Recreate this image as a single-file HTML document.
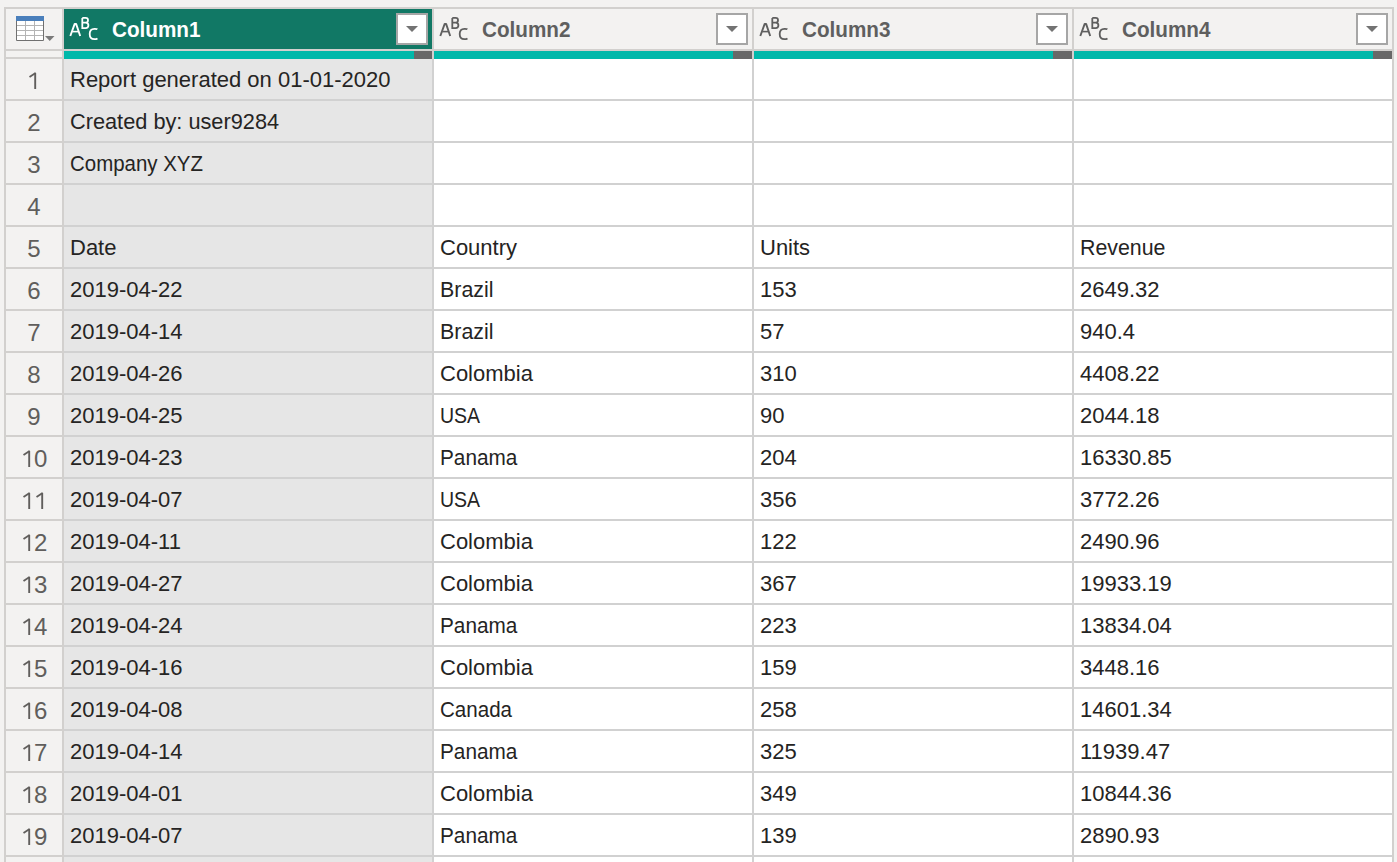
<!DOCTYPE html>
<html><head><meta charset="utf-8"><style>
*{margin:0;padding:0;box-sizing:border-box}
html,body{width:1397px;height:862px;overflow:hidden;background:#f3f2f1;position:relative;font-family:"Liberation Sans",sans-serif}
.a{position:absolute}
.t{position:absolute;font-size:22px;line-height:22px;color:#252423;white-space:nowrap}
.rn{position:absolute;font-size:24px;line-height:24px;color:#605e5c;width:56px;text-align:center;white-space:nowrap}
.hd{position:absolute;font-size:22px;line-height:22px;font-weight:bold;white-space:nowrap;transform:scaleX(0.94);transform-origin:0 0}
.ic{position:absolute;line-height:1;white-space:nowrap}
.dd{position:absolute;width:32px;height:32px;top:13px;background:#fff;border:2px solid #a6a6a6}
.dd i{position:absolute;left:8px;top:11px;width:0;height:0;border-left:6px solid transparent;border-right:6px solid transparent;border-top:6px solid #737373}
</style></head><body>
<div class="a" style="left:4px;top:7px;width:1390px;height:855px;background:#d2d0ce"></div><div class="a" style="left:6px;top:9px;width:56px;height:853px;background:#f3f2f1"></div><div class="a" style="left:64px;top:59px;width:368px;height:803px;background:#e6e6e6"></div><div class="a" style="left:64px;top:9px;width:368px;height:40px;background:#117865"></div><div class="a" style="left:64px;top:51px;width:350px;height:8px;background:#01b8aa"></div><div class="a" style="left:414px;top:51px;width:18px;height:8px;background:#686868"></div><div class="a" style="left:434px;top:59px;width:318px;height:803px;background:#ffffff"></div><div class="a" style="left:434px;top:9px;width:318px;height:40px;background:#f3f2f1"></div><div class="a" style="left:434px;top:51px;width:299px;height:8px;background:#01b8aa"></div><div class="a" style="left:733px;top:51px;width:19px;height:8px;background:#686868"></div><div class="a" style="left:754px;top:59px;width:318px;height:803px;background:#ffffff"></div><div class="a" style="left:754px;top:9px;width:318px;height:40px;background:#f3f2f1"></div><div class="a" style="left:754px;top:51px;width:299px;height:8px;background:#01b8aa"></div><div class="a" style="left:1053px;top:51px;width:19px;height:8px;background:#686868"></div><div class="a" style="left:1074px;top:59px;width:318px;height:803px;background:#ffffff"></div><div class="a" style="left:1074px;top:9px;width:318px;height:40px;background:#f3f2f1"></div><div class="a" style="left:1074px;top:51px;width:299px;height:8px;background:#01b8aa"></div><div class="a" style="left:1373px;top:51px;width:19px;height:8px;background:#686868"></div><div class="a" style="left:6px;top:49px;width:56px;height:2px;background:#d2d0ce"></div><div class="a" style="left:6px;top:57px;width:56px;height:2px;background:#d2d0ce"></div><div class="a" style="left:6px;top:99px;width:56px;height:2px;background:#d2d0ce"></div><div class="a" style="left:64px;top:99px;width:368px;height:2px;background:#d1d1d1"></div><div class="a" style="left:434px;top:99px;width:318px;height:2px;background:#d1d1d1"></div><div class="a" style="left:754px;top:99px;width:318px;height:2px;background:#d1d1d1"></div><div class="a" style="left:1074px;top:99px;width:318px;height:2px;background:#d1d1d1"></div><div class="a" style="left:6px;top:141px;width:56px;height:2px;background:#d2d0ce"></div><div class="a" style="left:64px;top:141px;width:368px;height:2px;background:#d1d1d1"></div><div class="a" style="left:434px;top:141px;width:318px;height:2px;background:#d1d1d1"></div><div class="a" style="left:754px;top:141px;width:318px;height:2px;background:#d1d1d1"></div><div class="a" style="left:1074px;top:141px;width:318px;height:2px;background:#d1d1d1"></div><div class="a" style="left:6px;top:183px;width:56px;height:2px;background:#d2d0ce"></div><div class="a" style="left:64px;top:183px;width:368px;height:2px;background:#d1d1d1"></div><div class="a" style="left:434px;top:183px;width:318px;height:2px;background:#d1d1d1"></div><div class="a" style="left:754px;top:183px;width:318px;height:2px;background:#d1d1d1"></div><div class="a" style="left:1074px;top:183px;width:318px;height:2px;background:#d1d1d1"></div><div class="a" style="left:6px;top:225px;width:56px;height:2px;background:#d2d0ce"></div><div class="a" style="left:64px;top:225px;width:368px;height:2px;background:#d1d1d1"></div><div class="a" style="left:434px;top:225px;width:318px;height:2px;background:#d1d1d1"></div><div class="a" style="left:754px;top:225px;width:318px;height:2px;background:#d1d1d1"></div><div class="a" style="left:1074px;top:225px;width:318px;height:2px;background:#d1d1d1"></div><div class="a" style="left:6px;top:267px;width:56px;height:2px;background:#d2d0ce"></div><div class="a" style="left:64px;top:267px;width:368px;height:2px;background:#d1d1d1"></div><div class="a" style="left:434px;top:267px;width:318px;height:2px;background:#d1d1d1"></div><div class="a" style="left:754px;top:267px;width:318px;height:2px;background:#d1d1d1"></div><div class="a" style="left:1074px;top:267px;width:318px;height:2px;background:#d1d1d1"></div><div class="a" style="left:6px;top:309px;width:56px;height:2px;background:#d2d0ce"></div><div class="a" style="left:64px;top:309px;width:368px;height:2px;background:#d1d1d1"></div><div class="a" style="left:434px;top:309px;width:318px;height:2px;background:#d1d1d1"></div><div class="a" style="left:754px;top:309px;width:318px;height:2px;background:#d1d1d1"></div><div class="a" style="left:1074px;top:309px;width:318px;height:2px;background:#d1d1d1"></div><div class="a" style="left:6px;top:351px;width:56px;height:2px;background:#d2d0ce"></div><div class="a" style="left:64px;top:351px;width:368px;height:2px;background:#d1d1d1"></div><div class="a" style="left:434px;top:351px;width:318px;height:2px;background:#d1d1d1"></div><div class="a" style="left:754px;top:351px;width:318px;height:2px;background:#d1d1d1"></div><div class="a" style="left:1074px;top:351px;width:318px;height:2px;background:#d1d1d1"></div><div class="a" style="left:6px;top:393px;width:56px;height:2px;background:#d2d0ce"></div><div class="a" style="left:64px;top:393px;width:368px;height:2px;background:#d1d1d1"></div><div class="a" style="left:434px;top:393px;width:318px;height:2px;background:#d1d1d1"></div><div class="a" style="left:754px;top:393px;width:318px;height:2px;background:#d1d1d1"></div><div class="a" style="left:1074px;top:393px;width:318px;height:2px;background:#d1d1d1"></div><div class="a" style="left:6px;top:435px;width:56px;height:2px;background:#d2d0ce"></div><div class="a" style="left:64px;top:435px;width:368px;height:2px;background:#d1d1d1"></div><div class="a" style="left:434px;top:435px;width:318px;height:2px;background:#d1d1d1"></div><div class="a" style="left:754px;top:435px;width:318px;height:2px;background:#d1d1d1"></div><div class="a" style="left:1074px;top:435px;width:318px;height:2px;background:#d1d1d1"></div><div class="a" style="left:6px;top:477px;width:56px;height:2px;background:#d2d0ce"></div><div class="a" style="left:64px;top:477px;width:368px;height:2px;background:#d1d1d1"></div><div class="a" style="left:434px;top:477px;width:318px;height:2px;background:#d1d1d1"></div><div class="a" style="left:754px;top:477px;width:318px;height:2px;background:#d1d1d1"></div><div class="a" style="left:1074px;top:477px;width:318px;height:2px;background:#d1d1d1"></div><div class="a" style="left:6px;top:519px;width:56px;height:2px;background:#d2d0ce"></div><div class="a" style="left:64px;top:519px;width:368px;height:2px;background:#d1d1d1"></div><div class="a" style="left:434px;top:519px;width:318px;height:2px;background:#d1d1d1"></div><div class="a" style="left:754px;top:519px;width:318px;height:2px;background:#d1d1d1"></div><div class="a" style="left:1074px;top:519px;width:318px;height:2px;background:#d1d1d1"></div><div class="a" style="left:6px;top:561px;width:56px;height:2px;background:#d2d0ce"></div><div class="a" style="left:64px;top:561px;width:368px;height:2px;background:#d1d1d1"></div><div class="a" style="left:434px;top:561px;width:318px;height:2px;background:#d1d1d1"></div><div class="a" style="left:754px;top:561px;width:318px;height:2px;background:#d1d1d1"></div><div class="a" style="left:1074px;top:561px;width:318px;height:2px;background:#d1d1d1"></div><div class="a" style="left:6px;top:603px;width:56px;height:2px;background:#d2d0ce"></div><div class="a" style="left:64px;top:603px;width:368px;height:2px;background:#d1d1d1"></div><div class="a" style="left:434px;top:603px;width:318px;height:2px;background:#d1d1d1"></div><div class="a" style="left:754px;top:603px;width:318px;height:2px;background:#d1d1d1"></div><div class="a" style="left:1074px;top:603px;width:318px;height:2px;background:#d1d1d1"></div><div class="a" style="left:6px;top:645px;width:56px;height:2px;background:#d2d0ce"></div><div class="a" style="left:64px;top:645px;width:368px;height:2px;background:#d1d1d1"></div><div class="a" style="left:434px;top:645px;width:318px;height:2px;background:#d1d1d1"></div><div class="a" style="left:754px;top:645px;width:318px;height:2px;background:#d1d1d1"></div><div class="a" style="left:1074px;top:645px;width:318px;height:2px;background:#d1d1d1"></div><div class="a" style="left:6px;top:687px;width:56px;height:2px;background:#d2d0ce"></div><div class="a" style="left:64px;top:687px;width:368px;height:2px;background:#d1d1d1"></div><div class="a" style="left:434px;top:687px;width:318px;height:2px;background:#d1d1d1"></div><div class="a" style="left:754px;top:687px;width:318px;height:2px;background:#d1d1d1"></div><div class="a" style="left:1074px;top:687px;width:318px;height:2px;background:#d1d1d1"></div><div class="a" style="left:6px;top:729px;width:56px;height:2px;background:#d2d0ce"></div><div class="a" style="left:64px;top:729px;width:368px;height:2px;background:#d1d1d1"></div><div class="a" style="left:434px;top:729px;width:318px;height:2px;background:#d1d1d1"></div><div class="a" style="left:754px;top:729px;width:318px;height:2px;background:#d1d1d1"></div><div class="a" style="left:1074px;top:729px;width:318px;height:2px;background:#d1d1d1"></div><div class="a" style="left:6px;top:771px;width:56px;height:2px;background:#d2d0ce"></div><div class="a" style="left:64px;top:771px;width:368px;height:2px;background:#d1d1d1"></div><div class="a" style="left:434px;top:771px;width:318px;height:2px;background:#d1d1d1"></div><div class="a" style="left:754px;top:771px;width:318px;height:2px;background:#d1d1d1"></div><div class="a" style="left:1074px;top:771px;width:318px;height:2px;background:#d1d1d1"></div><div class="a" style="left:6px;top:813px;width:56px;height:2px;background:#d2d0ce"></div><div class="a" style="left:64px;top:813px;width:368px;height:2px;background:#d1d1d1"></div><div class="a" style="left:434px;top:813px;width:318px;height:2px;background:#d1d1d1"></div><div class="a" style="left:754px;top:813px;width:318px;height:2px;background:#d1d1d1"></div><div class="a" style="left:1074px;top:813px;width:318px;height:2px;background:#d1d1d1"></div><div class="a" style="left:6px;top:855px;width:56px;height:2px;background:#d2d0ce"></div><div class="a" style="left:64px;top:855px;width:368px;height:2px;background:#d1d1d1"></div><div class="a" style="left:434px;top:855px;width:318px;height:2px;background:#d1d1d1"></div><div class="a" style="left:754px;top:855px;width:318px;height:2px;background:#d1d1d1"></div><div class="a" style="left:1074px;top:855px;width:318px;height:2px;background:#d1d1d1"></div><div class="a" style="left:432px;top:59px;width:2px;height:803px;background:#d1d1d1"></div><div class="a" style="left:752px;top:59px;width:2px;height:803px;background:#d1d1d1"></div><div class="a" style="left:1072px;top:59px;width:2px;height:803px;background:#d1d1d1"></div><svg class="a" style="left:0;top:0" width="60" height="48" viewBox="0 0 60 48">
<rect x="16" y="21" width="28" height="20" fill="#fff"/>
<rect x="16" y="16" width="28" height="5" fill="#4a7fbb"/>
<path d="M16.5 21V40.5H43.5V21" stroke="#707070" stroke-width="1" fill="none"/>
<path d="M17 25.5H43M17 30.5H43M17 35.5H43M25.5 21V40M34.5 21V40" stroke="#b4b4b4" stroke-width="1"/>
<path d="M45 36H54.5L49.75 41Z" fill="#7a7a7a"/>
</svg><svg class="a" style="left:64px;top:0" width="40" height="48" viewBox="0 0 40 48" fill="none" stroke="#ffffff">
<path d="M6.3 36 L10.7 23.9 H12.1 L16.2 36" stroke-width="1.9" stroke-linejoin="round"/>
<path d="M8.3 31.6 H14.2" stroke-width="1.6"/>
<path d="M18.3 17.9 H21.6 C23.4 17.9 24.0 18.8 24.0 20.2 C24.0 21.6 23.3 22.6 21.6 22.6 H18.3 M21.6 22.6 C23.8 22.6 24.4 23.6 24.4 25.3 C24.4 27.1 23.7 28.1 21.6 28.1 H18.3 V17.9" stroke-width="1.8"/>
<path d="M33.4 29.3 C32.6 28.7 31.6 28.8 30.4 28.8 C27.6 28.8 25.7 30.9 25.7 34 C25.7 37.2 27.6 39.2 30.4 39.2 C31.6 39.2 32.6 39 33.5 38.4" stroke-width="1.8"/>
</svg><div class="hd" style="left:112px;top:19px;color:#ffffff">Column1</div><div class="dd" style="left:396px"><i></i></div><svg class="a" style="left:434px;top:0" width="40" height="48" viewBox="0 0 40 48" fill="none" stroke="#5f5f5f">
<path d="M6.3 36 L10.7 23.9 H12.1 L16.2 36" stroke-width="1.9" stroke-linejoin="round"/>
<path d="M8.3 31.6 H14.2" stroke-width="1.6"/>
<path d="M18.3 17.9 H21.6 C23.4 17.9 24.0 18.8 24.0 20.2 C24.0 21.6 23.3 22.6 21.6 22.6 H18.3 M21.6 22.6 C23.8 22.6 24.4 23.6 24.4 25.3 C24.4 27.1 23.7 28.1 21.6 28.1 H18.3 V17.9" stroke-width="1.8"/>
<path d="M33.4 29.3 C32.6 28.7 31.6 28.8 30.4 28.8 C27.6 28.8 25.7 30.9 25.7 34 C25.7 37.2 27.6 39.2 30.4 39.2 C31.6 39.2 32.6 39 33.5 38.4" stroke-width="1.8"/>
</svg><div class="hd" style="left:482px;top:19px;color:#5f5f5f">Column2</div><div class="dd" style="left:716px"><i></i></div><svg class="a" style="left:754px;top:0" width="40" height="48" viewBox="0 0 40 48" fill="none" stroke="#5f5f5f">
<path d="M6.3 36 L10.7 23.9 H12.1 L16.2 36" stroke-width="1.9" stroke-linejoin="round"/>
<path d="M8.3 31.6 H14.2" stroke-width="1.6"/>
<path d="M18.3 17.9 H21.6 C23.4 17.9 24.0 18.8 24.0 20.2 C24.0 21.6 23.3 22.6 21.6 22.6 H18.3 M21.6 22.6 C23.8 22.6 24.4 23.6 24.4 25.3 C24.4 27.1 23.7 28.1 21.6 28.1 H18.3 V17.9" stroke-width="1.8"/>
<path d="M33.4 29.3 C32.6 28.7 31.6 28.8 30.4 28.8 C27.6 28.8 25.7 30.9 25.7 34 C25.7 37.2 27.6 39.2 30.4 39.2 C31.6 39.2 32.6 39 33.5 38.4" stroke-width="1.8"/>
</svg><div class="hd" style="left:802px;top:19px;color:#5f5f5f">Column3</div><div class="dd" style="left:1036px"><i></i></div><svg class="a" style="left:1074px;top:0" width="40" height="48" viewBox="0 0 40 48" fill="none" stroke="#5f5f5f">
<path d="M6.3 36 L10.7 23.9 H12.1 L16.2 36" stroke-width="1.9" stroke-linejoin="round"/>
<path d="M8.3 31.6 H14.2" stroke-width="1.6"/>
<path d="M18.3 17.9 H21.6 C23.4 17.9 24.0 18.8 24.0 20.2 C24.0 21.6 23.3 22.6 21.6 22.6 H18.3 M21.6 22.6 C23.8 22.6 24.4 23.6 24.4 25.3 C24.4 27.1 23.7 28.1 21.6 28.1 H18.3 V17.9" stroke-width="1.8"/>
<path d="M33.4 29.3 C32.6 28.7 31.6 28.8 30.4 28.8 C27.6 28.8 25.7 30.9 25.7 34 C25.7 37.2 27.6 39.2 30.4 39.2 C31.6 39.2 32.6 39 33.5 38.4" stroke-width="1.8"/>
</svg><div class="hd" style="left:1122px;top:19px;color:#5f5f5f">Column4</div><div class="dd" style="left:1356px"><i></i></div><div class="rn" style="left:6px;top:69px"><svg width="13.35" height="17" viewBox="0 0 13.35 17" style="vertical-align:baseline" fill="none" stroke="#605e5c"><path d="M8.2 17V0.8" stroke-width="1.9"/><path d="M2.5 4.9L8.6 1.0" stroke-width="1.8"/></svg></div><div class="t" style="left:70px;top:69px">Report generated on 01-01-2020</div><div class="rn" style="left:6px;top:111px">2</div><div class="t" style="left:70px;top:111px;transform:scaleX(0.9881);transform-origin:0 0">Created by: user9284</div><div class="rn" style="left:6px;top:153px">3</div><div class="t" style="left:70px;top:153px;transform:scaleX(0.9296);transform-origin:0 0">Company XYZ</div><div class="rn" style="left:6px;top:195px">4</div><div class="rn" style="left:6px;top:237px">5</div><div class="t" style="left:70px;top:237px">Date</div><div class="t" style="left:440px;top:237px">Country</div><div class="t" style="left:760px;top:237px">Units</div><div class="t" style="left:1080px;top:237px;transform:scaleX(0.9709);transform-origin:0 0">Revenue</div><div class="rn" style="left:6px;top:279px">6</div><div class="t" style="left:70px;top:279px">2019-04-22</div><div class="t" style="left:440px;top:279px;transform:scaleX(0.9717);transform-origin:0 0">Brazil</div><div class="t" style="left:760px;top:279px">153</div><div class="t" style="left:1080px;top:279px">2649.32</div><div class="rn" style="left:6px;top:321px">7</div><div class="t" style="left:70px;top:321px">2019-04-14</div><div class="t" style="left:440px;top:321px;transform:scaleX(0.9717);transform-origin:0 0">Brazil</div><div class="t" style="left:760px;top:321px">57</div><div class="t" style="left:1080px;top:321px">940.4</div><div class="rn" style="left:6px;top:363px">8</div><div class="t" style="left:70px;top:363px">2019-04-26</div><div class="t" style="left:440px;top:363px">Colombia</div><div class="t" style="left:760px;top:363px">310</div><div class="t" style="left:1080px;top:363px">4408.22</div><div class="rn" style="left:6px;top:405px">9</div><div class="t" style="left:70px;top:405px">2019-04-25</div><div class="t" style="left:440px;top:405px;transform:scaleX(0.8864);transform-origin:0 0">USA</div><div class="t" style="left:760px;top:405px">90</div><div class="t" style="left:1080px;top:405px">2044.18</div><div class="rn" style="left:6px;top:447px"><svg width="13.35" height="17" viewBox="0 0 13.35 17" style="vertical-align:baseline" fill="none" stroke="#605e5c"><path d="M8.2 17V0.8" stroke-width="1.9"/><path d="M2.5 4.9L8.6 1.0" stroke-width="1.8"/></svg>0</div><div class="t" style="left:70px;top:447px">2019-04-23</div><div class="t" style="left:440px;top:447px;transform:scaleX(0.9432);transform-origin:0 0">Panama</div><div class="t" style="left:760px;top:447px">204</div><div class="t" style="left:1080px;top:447px">16330.85</div><div class="rn" style="left:6px;top:489px"><svg width="13.35" height="17" viewBox="0 0 13.35 17" style="vertical-align:baseline" fill="none" stroke="#605e5c"><path d="M8.2 17V0.8" stroke-width="1.9"/><path d="M2.5 4.9L8.6 1.0" stroke-width="1.8"/></svg><svg width="13.35" height="17" viewBox="0 0 13.35 17" style="vertical-align:baseline" fill="none" stroke="#605e5c"><path d="M8.2 17V0.8" stroke-width="1.9"/><path d="M2.5 4.9L8.6 1.0" stroke-width="1.8"/></svg></div><div class="t" style="left:70px;top:489px">2019-04-07</div><div class="t" style="left:440px;top:489px;transform:scaleX(0.8864);transform-origin:0 0">USA</div><div class="t" style="left:760px;top:489px">356</div><div class="t" style="left:1080px;top:489px">3772.26</div><div class="rn" style="left:6px;top:531px"><svg width="13.35" height="17" viewBox="0 0 13.35 17" style="vertical-align:baseline" fill="none" stroke="#605e5c"><path d="M8.2 17V0.8" stroke-width="1.9"/><path d="M2.5 4.9L8.6 1.0" stroke-width="1.8"/></svg>2</div><div class="t" style="left:70px;top:531px">2019-04-11</div><div class="t" style="left:440px;top:531px">Colombia</div><div class="t" style="left:760px;top:531px">122</div><div class="t" style="left:1080px;top:531px">2490.96</div><div class="rn" style="left:6px;top:573px"><svg width="13.35" height="17" viewBox="0 0 13.35 17" style="vertical-align:baseline" fill="none" stroke="#605e5c"><path d="M8.2 17V0.8" stroke-width="1.9"/><path d="M2.5 4.9L8.6 1.0" stroke-width="1.8"/></svg>3</div><div class="t" style="left:70px;top:573px">2019-04-27</div><div class="t" style="left:440px;top:573px">Colombia</div><div class="t" style="left:760px;top:573px">367</div><div class="t" style="left:1080px;top:573px">19933.19</div><div class="rn" style="left:6px;top:615px"><svg width="13.35" height="17" viewBox="0 0 13.35 17" style="vertical-align:baseline" fill="none" stroke="#605e5c"><path d="M8.2 17V0.8" stroke-width="1.9"/><path d="M2.5 4.9L8.6 1.0" stroke-width="1.8"/></svg>4</div><div class="t" style="left:70px;top:615px">2019-04-24</div><div class="t" style="left:440px;top:615px;transform:scaleX(0.9432);transform-origin:0 0">Panama</div><div class="t" style="left:760px;top:615px">223</div><div class="t" style="left:1080px;top:615px">13834.04</div><div class="rn" style="left:6px;top:657px"><svg width="13.35" height="17" viewBox="0 0 13.35 17" style="vertical-align:baseline" fill="none" stroke="#605e5c"><path d="M8.2 17V0.8" stroke-width="1.9"/><path d="M2.5 4.9L8.6 1.0" stroke-width="1.8"/></svg>5</div><div class="t" style="left:70px;top:657px">2019-04-16</div><div class="t" style="left:440px;top:657px">Colombia</div><div class="t" style="left:760px;top:657px">159</div><div class="t" style="left:1080px;top:657px">3448.16</div><div class="rn" style="left:6px;top:699px"><svg width="13.35" height="17" viewBox="0 0 13.35 17" style="vertical-align:baseline" fill="none" stroke="#605e5c"><path d="M8.2 17V0.8" stroke-width="1.9"/><path d="M2.5 4.9L8.6 1.0" stroke-width="1.8"/></svg>6</div><div class="t" style="left:70px;top:699px">2019-04-08</div><div class="t" style="left:440px;top:699px;transform:scaleX(0.9342);transform-origin:0 0">Canada</div><div class="t" style="left:760px;top:699px">258</div><div class="t" style="left:1080px;top:699px">14601.34</div><div class="rn" style="left:6px;top:741px"><svg width="13.35" height="17" viewBox="0 0 13.35 17" style="vertical-align:baseline" fill="none" stroke="#605e5c"><path d="M8.2 17V0.8" stroke-width="1.9"/><path d="M2.5 4.9L8.6 1.0" stroke-width="1.8"/></svg>7</div><div class="t" style="left:70px;top:741px">2019-04-14</div><div class="t" style="left:440px;top:741px;transform:scaleX(0.9432);transform-origin:0 0">Panama</div><div class="t" style="left:760px;top:741px">325</div><div class="t" style="left:1080px;top:741px">11939.47</div><div class="rn" style="left:6px;top:783px"><svg width="13.35" height="17" viewBox="0 0 13.35 17" style="vertical-align:baseline" fill="none" stroke="#605e5c"><path d="M8.2 17V0.8" stroke-width="1.9"/><path d="M2.5 4.9L8.6 1.0" stroke-width="1.8"/></svg>8</div><div class="t" style="left:70px;top:783px">2019-04-01</div><div class="t" style="left:440px;top:783px">Colombia</div><div class="t" style="left:760px;top:783px">349</div><div class="t" style="left:1080px;top:783px">10844.36</div><div class="rn" style="left:6px;top:825px"><svg width="13.35" height="17" viewBox="0 0 13.35 17" style="vertical-align:baseline" fill="none" stroke="#605e5c"><path d="M8.2 17V0.8" stroke-width="1.9"/><path d="M2.5 4.9L8.6 1.0" stroke-width="1.8"/></svg>9</div><div class="t" style="left:70px;top:825px">2019-04-07</div><div class="t" style="left:440px;top:825px;transform:scaleX(0.9432);transform-origin:0 0">Panama</div><div class="t" style="left:760px;top:825px">139</div><div class="t" style="left:1080px;top:825px">2890.93</div>
</body></html>
